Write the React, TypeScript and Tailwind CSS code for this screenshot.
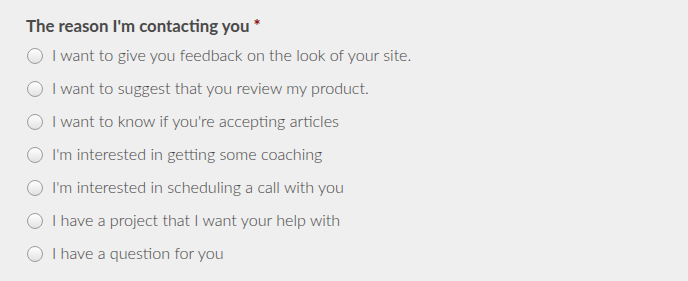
import React from "react";

const options = [
  "I want to give you feedback on the look of your site.",
  "I want to suggest that you review my product.",
  "I want to know if you're accepting articles",
  "I'm interested in getting some coaching",
  "I'm interested in scheduling a call with you",
  "I have a project that I want your help with",
  "I have a question for you",
];

const App = () => {
  return (
    <main className="w-[688px] h-[281px] bg-[#efefef] overflow-hidden font-['Lato',sans-serif]">
      <div className="pl-[26px] pt-[15px]">
        <p className="text-[16.8px] leading-[22px] font-bold text-[#4a4a4a]">
          The reason I'm contacting you <span className="text-[#8b0e0e]">*</span>
        </p>
        <div className="mt-[2px] flex flex-col">
          {options.map((opt, idx) => (
            <label key={idx} className="h-[33px] flex items-center">
              <span className="ml-[1px] w-[16px] h-[16px] rounded-full border border-[#9b9b9b] bg-gradient-to-b from-[#ffffff] to-[#e2e2e2]" />
              <span className="ml-[9px] text-[16.1px] font-light text-[#444444]">{opt}</span>
            </label>
          ))}
        </div>
      </div>
    </main>
  );
};

export default App;
